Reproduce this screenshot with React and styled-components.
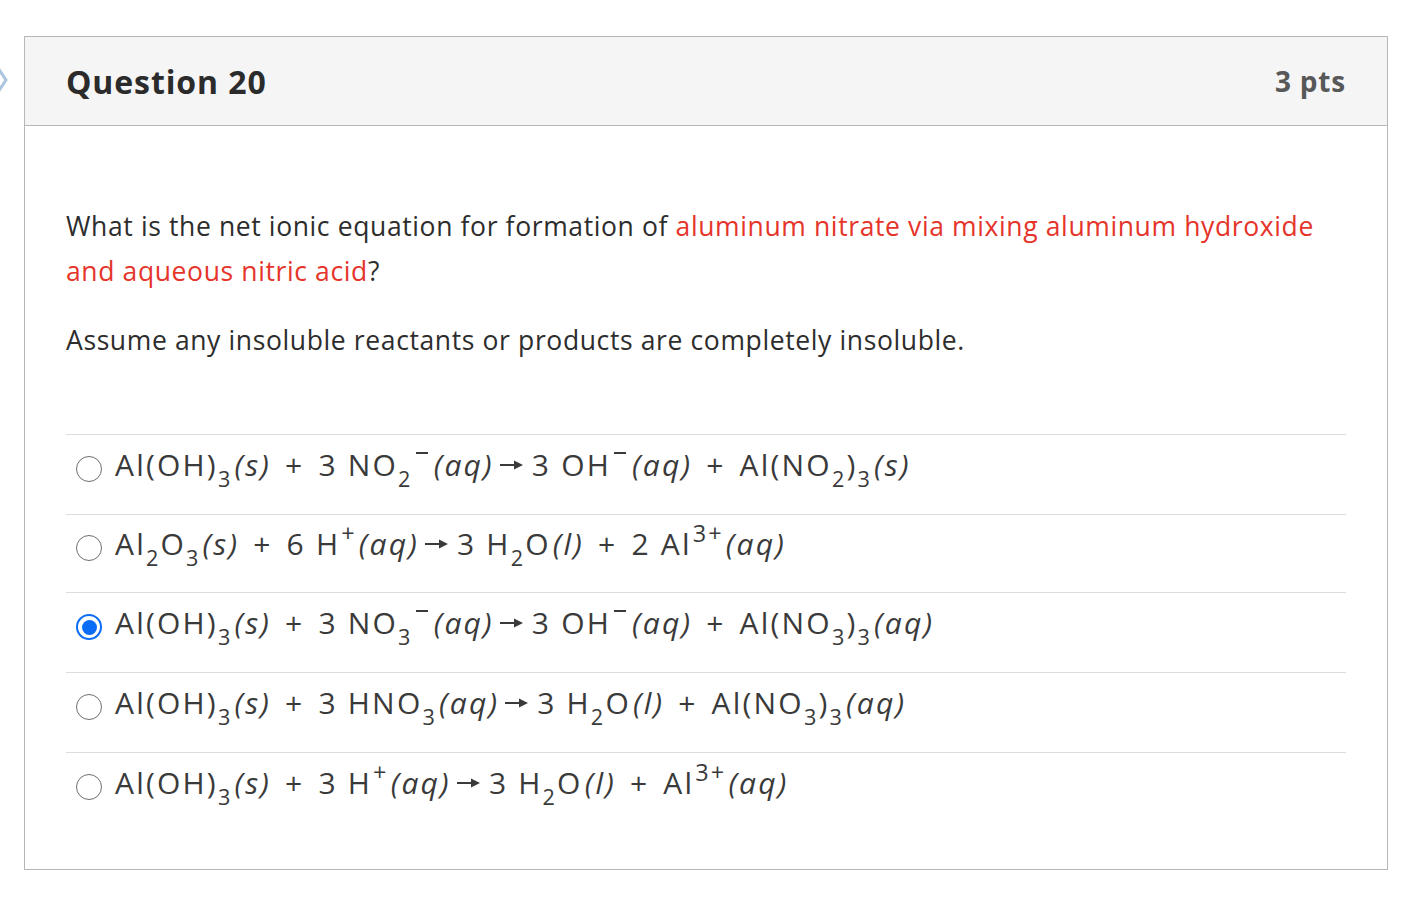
import React from 'react'
import styled, { createGlobalStyle } from 'styled-components'

const GlobalStyle = createGlobalStyle`
  body {
    margin: 0;
    background: #fff;
    font-family: "Open Sans", "Liberation Sans", sans-serif;
  }
`

const Page = styled.div`
  width: 1408px;
  height: 898px;
  padding: 36px 20px 0 24px;
  box-sizing: border-box;
  position: relative;
`

const SideChevron = styled.svg`
  position: absolute;
  left: -4px;
  top: 66px;
`

const Card = styled.div`
  border: 1px solid #b4b8bb;
  width: 1364px;
  box-sizing: border-box;
`

const Header = styled.div`
  display: flex;
  justify-content: space-between;
  align-items: center;
  height: 88px;
  padding: 0 41px;
  background: #f5f5f5;
  border-bottom: 1px solid #b4b8bb;
`

const Title = styled.h2`
  margin: 0;
  font-weight: 700;
  font-size: 32px;
  letter-spacing: 0.9px;
  color: #2b2b2b;
`

const Points = styled.div`
  font-weight: 700;
  font-size: 28px;
  letter-spacing: 0.8px;
  color: #585858;
`

const Body = styled.div`
  padding: 78px 41px 37px 41px;
`

const Prompt = styled.p`
  margin: 0 0 24px 0;
  max-width: 1262px;
  font-size: 26.5px;
  line-height: 45px;
  letter-spacing: 0.62px;
  color: #2d2d2d;
`

const Red = styled.span`
  color: #e5352b;
`

const Answers = styled.div`
  margin-top: 71px;
`

const Row = styled.label`
  display: flex;
  align-items: center;
  gap: 13px;
  box-sizing: border-box;
  height: ${({ $h }) => $h}px;
  border-top: 1px solid #dcdcdc;
  padding: 0 0 20px 10px;
`

const Radio = styled.span`
  flex: none;
  width: 26px;
  height: 26px;
  border-radius: 50%;
  box-sizing: border-box;
  border: ${({ $checked }) => ($checked ? '2.5px solid #0b6cf5' : '1.5px solid #6e6e6e')};
  display: flex;
  align-items: center;
  justify-content: center;
  margin-top: 9px;

  &::after {
    content: '';
    display: ${({ $checked }) => ($checked ? 'block' : 'none')};
    width: 15px;
    height: 15px;
    border-radius: 50%;
    background: #0b6cf5;
  }
`

const Equation = styled.span`
  font-size: 30px;
  color: #3a3a3a;
  letter-spacing: 2.2px;
  white-space: nowrap;
`

const Sub = styled.span`
  font-size: 0.72em;
  vertical-align: -0.5em;
  line-height: 0;
`

const Sup = styled.span`
  font-size: 0.78em;
  vertical-align: 0.55em;
  line-height: 0;
  margin-left: 1px;
`

const MinusBar = styled.span`
  display: inline-block;
  width: 12px;
  height: 2px;
  margin: 0 4px 0 3px;
  background: #3a3a3a;
  vertical-align: 0.72em;
`

const Ital = styled.i`
  font-style: italic;
  margin-left: 2px;
`

const ArrowIcon = styled.svg`
  width: 24px;
  height: 12px;
  margin: 0 8px 0 6px;
  vertical-align: 0.18em;
`

const PlusSign = styled.span`
  margin: 0 14px;
`

const Plus = () => <PlusSign>+</PlusSign>

const Minus = () => <MinusBar role="img" aria-label="minus" />

const Arrow = () => (
  <ArrowIcon viewBox="0 0 24 12">
    <path d="M0 6 H16" stroke="#3a3a3a" strokeWidth="2" />
    <path d="M14 1.5 L23 6 L14 10.5 Z" fill="#3a3a3a" />
  </ArrowIcon>
)

const answers = [
  {
    checked: false,
    eq: (
      <>
        Al(OH)<Sub>3</Sub><Ital>(s)</Ital><Plus />3 NO<Sub>2</Sub><Minus /><Ital>(aq)</Ital>
        <Arrow />3 OH<Minus /><Ital>(aq)</Ital><Plus />Al(NO<Sub>2</Sub>)<Sub>3</Sub><Ital>(s)</Ital>
      </>
    ),
  },
  {
    checked: false,
    eq: (
      <>
        Al<Sub>2</Sub>O<Sub>3</Sub><Ital>(s)</Ital><Plus />6 H<Sup>+</Sup><Ital>(aq)</Ital>
        <Arrow />3 H<Sub>2</Sub>O<Ital>(l)</Ital><Plus />2 Al<Sup>3+</Sup><Ital>(aq)</Ital>
      </>
    ),
  },
  {
    checked: true,
    eq: (
      <>
        Al(OH)<Sub>3</Sub><Ital>(s)</Ital><Plus />3 NO<Sub>3</Sub><Minus /><Ital>(aq)</Ital>
        <Arrow />3 OH<Minus /><Ital>(aq)</Ital><Plus />Al(NO<Sub>3</Sub>)<Sub>3</Sub><Ital>(aq)</Ital>
      </>
    ),
  },
  {
    checked: false,
    eq: (
      <>
        Al(OH)<Sub>3</Sub><Ital>(s)</Ital><Plus />3 HNO<Sub>3</Sub><Ital>(aq)</Ital>
        <Arrow />3 H<Sub>2</Sub>O<Ital>(l)</Ital><Plus />Al(NO<Sub>3</Sub>)<Sub>3</Sub><Ital>(aq)</Ital>
      </>
    ),
  },
  {
    checked: false,
    eq: (
      <>
        Al(OH)<Sub>3</Sub><Ital>(s)</Ital><Plus />3 H<Sup>+</Sup><Ital>(aq)</Ital>
        <Arrow />3 H<Sub>2</Sub>O<Ital>(l)</Ital><Plus />Al<Sup>3+</Sup><Ital>(aq)</Ital>
      </>
    ),
  },
]

const rowHeights = [80, 78, 80, 80, 80]

export default function App() {
  return (
    <>
      <GlobalStyle />
      <Page>
        <SideChevron width="12" height="28" viewBox="0 0 12 28">
          <path d="M2 2 L10 14 L2 26" fill="none" stroke="#a9c6de" strokeWidth="3" />
        </SideChevron>
        <Card>
          <Header>
            <Title>Question 20</Title>
            <Points>3 pts</Points>
          </Header>
          <Body>
            <Prompt>
              What is the net ionic equation for formation of{' '}
              <Red>aluminum nitrate via mixing aluminum hydroxide and aqueous nitric acid</Red>?
            </Prompt>
            <Prompt>Assume any insoluble reactants or products are completely insoluble.</Prompt>
            <Answers>
              {answers.map((a, i) => (
                <Row key={i} $h={rowHeights[i]}>
                  <Radio $checked={a.checked} />
                  <Equation>{a.eq}</Equation>
                </Row>
              ))}
            </Answers>
          </Body>
        </Card>
      </Page>
    </>
  )
}
